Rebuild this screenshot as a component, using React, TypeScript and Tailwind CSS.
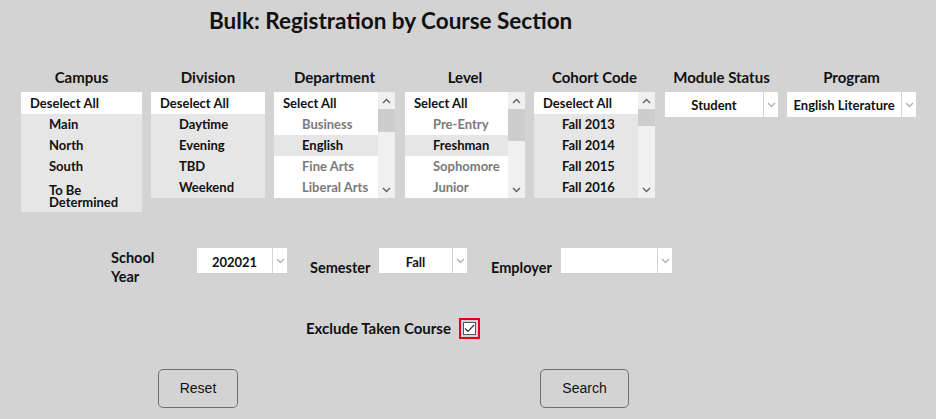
type Item = { label: string; selected?: boolean; wrap?: boolean };

function Chevron({ up = false, className = "" }: { up?: boolean; className?: string }) {
  return (
    <svg width="9" height="6" viewBox="0 0 9 6" className={className}>
      <path
        d={up ? "M1 5 L4.5 1.5 L8 5" : "M1 1 L4.5 4.5 L8 1"}
        fill="none"
        stroke="currentColor"
        strokeWidth="1.4"
      />
    </svg>
  );
}

function ScrollBar({ thumb }: { thumb: string }) {
  return (
    <div className="flex w-[17px] flex-col bg-[#f0f0f0]">
      <div className="flex h-[17px] items-center justify-center text-[#606060]">
        <Chevron up />
      </div>
      <div className={`${thumb} bg-[#cdcdcd]`} />
      <div className="flex-1" />
      <div className="flex h-[17px] items-center justify-center text-[#606060]">
        <Chevron />
      </div>
    </div>
  );
}

function ListBox({
  head,
  items,
  width,
  scroll,
}: {
  head: string;
  items: Item[];
  width: string;
  scroll?: string;
}) {
  return (
    <div className={`flex ${width} bg-white`}>
      <div className="flex flex-1 flex-col">
        <div className="flex h-[22px] items-center bg-white pl-[9px] pt-[1px] text-[13px] text-[#111]">{head}</div>
        {items.map((it) => (
          <div
            key={it.label}
            className={`pl-[28px] pr-1 text-[13px] ${
              it.wrap ? "pt-[7px] pb-[4px] leading-[12px]" : "flex h-[21px] items-center"
            } ${it.selected ? "bg-[#e6e6e6] text-[#111]" : "bg-white text-[#7a7a7a]"}`}
          >
            {it.label}
          </div>
        ))}
      </div>
      {scroll && <ScrollBar thumb={scroll} />}
    </div>
  );
}

function Select({ value, width, pad = "pt-[3px]" }: { value: string; width: string; pad?: string }) {
  return (
    <div className="flex h-[25px]">
      <div className={`flex ${width} ${pad} items-center justify-center bg-white text-[13px] text-[#111]`}>{value}</div>
      <div className="ml-[1px] flex w-[14px] items-center justify-center bg-white text-[#b0b0b0]">
        <Chevron />
      </div>
    </div>
  );
}

function Column({ title, ml, width, children }: { title: string; ml: string; width: string; children: React.ReactNode }) {
  return (
    <div className={`flex ${ml} ${width} flex-col`}>
      <div className="mb-[7px] h-[16px] text-center text-[15px] leading-[16px] text-[#111] whitespace-nowrap">{title}</div>
      {children}
    </div>
  );
}

export default function App() {
  const sel = (label: string): Item => ({ label, selected: true });
  const off = (label: string): Item => ({ label });

  return (
    <div className="h-[419px] w-[936px] overflow-hidden bg-[#d3d3d3] font-['Lato',sans-serif] font-bold">
      <h1 className="ml-[209px] pt-[8px] text-[22.5px] leading-[26px] text-[#111]">Bulk: Registration by Course Section</h1>

      {/* filter columns */}
      <div className="mt-[35px] flex items-start">
        <Column title="Campus" ml="ml-[21px]" width="w-[121px]">
          <div className="bg-[#e6e6e6]">
            <ListBox
              head="Deselect All"
              width="w-[121px]"
              items={[sel("Main"), sel("North"), sel("South"), { label: "To Be Determined", selected: true, wrap: true }]}
            />
          </div>
        </Column>
        <Column title="Division" ml="ml-[9px]" width="w-[114px]">
          <ListBox head="Deselect All" width="w-[114px]" items={[sel("Daytime"), sel("Evening"), sel("TBD"), sel("Weekend")]} />
        </Column>
        <Column title="Department" ml="ml-[9px]" width="w-[121px]">
          <ListBox
            head="Select All"
            width="w-[121px]"
            scroll="h-[23px]"
            items={[off("Business"), sel("English"), off("Fine Arts"), off("Liberal Arts")]}
          />
        </Column>
        <Column title="Level" ml="ml-[10px]" width="w-[120px]">
          <ListBox
            head="Select All"
            width="w-[120px]"
            scroll="h-[32px]"
            items={[off("Pre-Entry"), sel("Freshman"), off("Sophomore"), off("Junior")]}
          />
        </Column>
        <Column title="Cohort Code" ml="ml-[9px]" width="w-[121px]">
          <ListBox
            head="Deselect All"
            width="w-[121px]"
            scroll="h-[17px]"
            items={[sel("Fall 2013"), sel("Fall 2014"), sel("Fall 2015"), sel("Fall 2016")]}
          />
        </Column>
        <Column title="Module Status" ml="ml-[10px]" width="w-[113px]">
          <Select value="Student" width="w-[98px]" pad="pt-[2px]" />
        </Column>
        <Column title="Program" ml="ml-[9px]" width="w-[129px]">
          <Select value="English Literature" width="w-[115px]" pad="pt-[2px]" />
        </Column>
      </div>

      {/* year / semester / employer */}
      <div className="mt-[36px] flex items-start text-[14.5px] text-[#111]">
        <div className="ml-[111px] w-[86px] leading-[19px]">
          School
          <br />
          Year
        </div>
        <Select value="202021" width="w-[75px]" pad="pt-[5px]" />
        <div className="ml-[23px] mt-[10px] w-[69px] leading-[19px]">Semester</div>
        <Select value="Fall" width="w-[73px]" pad="pt-[5px]" />
        <div className="ml-[24px] mt-[10px] w-[70px] leading-[19px]">Employer</div>
        <Select value="" width="w-[96px]" />
      </div>

      {/* exclude taken course */}
      <div className="mt-[31px] flex items-center">
        <span className="ml-[306px] w-[153px] text-[15px] text-[#111]">Exclude Taken Course</span>
        <div className="flex h-[21px] w-[21px] items-center justify-center border-2 border-[#e0001b]">
          <div className="flex h-[13px] w-[13px] items-center justify-center border border-[#555] bg-white">
            <svg width="11" height="9" viewBox="0 0 11 9">
              <path d="M1 4.5 L4 7.5 L10 1" fill="none" stroke="#333" strokeWidth="1.2" />
            </svg>
          </div>
        </div>
      </div>

      {/* buttons */}
      <div className="mt-[29px] flex font-['Liberation_Sans',Arial,sans-serif] font-normal">
        <button className="ml-[158px] h-[39px] w-[80px] rounded-[5px] border border-[#707070] text-[14px] text-[#111]">
          Reset
        </button>
        <button className="ml-[302px] h-[39px] w-[89px] rounded-[5px] border border-[#707070] text-[14px] text-[#111]">
          Search
        </button>
      </div>
    </div>
  );
}
